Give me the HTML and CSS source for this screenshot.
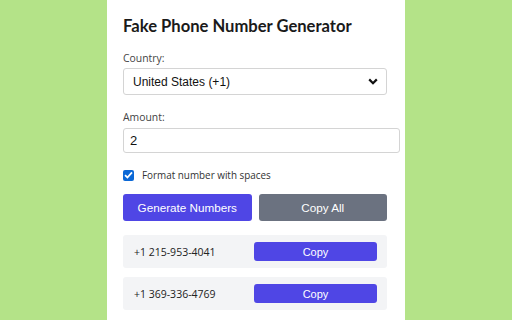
FILE: index.html
```html
<!DOCTYPE html>
<html>
<head>
<meta charset="utf-8">
<link rel="stylesheet" href="styles.css">
</head>
<body>
<div class="panel">
  <h1 class="title">Fake Phone Number Generator</h1>
  <label class="label">Country:</label>
  <div class="select">
    <span>United States (+1)</span>
    <svg class="chev" width="10" height="7" viewBox="0 0 10 7"><path d="M1.2 1.4 L5 5.2 L8.8 1.4" fill="none" stroke="#111" stroke-width="2.2"/></svg>
  </div>
  <label class="label label-amount">Amount:</label>
  <div class="input">2</div>
  <div class="check-row">
    <span class="checkbox"><svg width="9" height="8" viewBox="0 0 9 8"><path d="M1 4.2 L3.4 6.5 L8 1.3" fill="none" stroke="#fff" stroke-width="1.8"/></svg></span>
    <span class="check-label">Format number with spaces</span>
  </div>
  <div class="buttons">
    <div class="btn btn-primary">Generate Numbers</div>
    <div class="btn btn-gray">Copy All</div>
  </div>
  <div class="results">
    <div class="row"><span class="num">+1 215-953-4041</span><div class="copy">Copy</div></div>
    <div class="row"><span class="num">+1 369-336-4769</span><div class="copy">Copy</div></div>
  </div>
</div>
</body>
</html>
```

FILE: styles.css
```css
html, body { margin: 0; padding: 0; }
body {
  background: #b4e388;
  height: 320px;
  overflow: hidden;
  font-family: "Open Sans", "Noto Sans", sans-serif;
}
.panel {
  width: 298px;
  margin: 0 auto;
  background: #fff;
  box-sizing: border-box;
  min-height: 320px;
  padding: 15px 18px 0 16px;
}
.title {
  margin: 0;
  font-family: "Lato", sans-serif;
  font-weight: 700;
  font-size: 16.6px;
  line-height: 22px;
  color: #1a1a1a;
}
.label {
  display: block;
  margin-top: 14px;
  font-size: 10.4px;
  line-height: 15px;
  color: #444;
}
.label-amount { margin-top: 15px; }
.select {
  margin-top: 2px;
  height: 27px;
  box-sizing: border-box;
  border: 1px solid #d4d4d4;
  border-radius: 3px;
  display: flex;
  align-items: center;
  justify-content: space-between;
  padding: 0 8px 0 9px;
  font-family: "Liberation Sans", Arial, sans-serif;
  font-size: 12px;
  color: #111;
}
.chev { display: block; }
.input {
  margin-top: 3px;
  width: 277px;
  height: 25px;
  box-sizing: border-box;
  border: 1px solid #d4d4d4;
  border-radius: 3px;
  padding: 0 6px;
  display: flex;
  align-items: center;
  font-family: "Liberation Sans", Arial, sans-serif;
  font-size: 13px;
  color: #111;
}
.check-row {
  margin-top: 15px;
  display: flex;
  align-items: center;
  gap: 8px;
}
.checkbox {
  width: 11px;
  height: 11px;
  border-radius: 2px;
  background: #0b68d6;
  display: flex;
  align-items: center;
  justify-content: center;
}
.checkbox svg { display: block; }
.check-label {
  font-size: 9.9px;
  color: #333;
  line-height: 14px;
}
.buttons {
  margin-top: 12px;
  display: flex;
  gap: 7px;
}
.btn {
  flex: 1;
  height: 27px;
  border-radius: 3px;
  display: flex;
  align-items: center;
  justify-content: center;
  color: #fff;
  font-family: "Liberation Sans", Arial, sans-serif;
  font-size: 11.7px;
}
.btn-primary { background: #4f46e5; }
.btn-gray { background: #6b7280; }
.results {
  margin-top: 14px;
  display: flex;
  flex-direction: column;
  gap: 9px;
}
.row {
  height: 33px;
  background: #f3f4f6;
  border-radius: 3px;
  display: flex;
  align-items: center;
  justify-content: space-between;
  padding: 0 10px 0 11px;
}
.num {
  font-size: 10.5px;
  color: #222;
}
.copy {
  width: 123px;
  height: 19px;
  border-radius: 3px;
  background: #4f46e5;
  color: #fff;
  display: flex;
  align-items: center;
  justify-content: center;
  font-family: "Liberation Sans", Arial, sans-serif;
  font-size: 11px;
}
```
